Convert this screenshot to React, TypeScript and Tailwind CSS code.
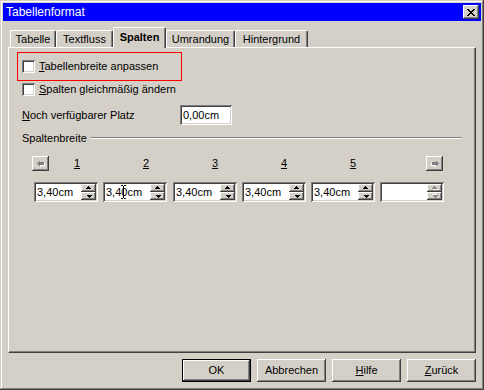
import React from 'react';

const raised =
  'shadow-[inset_-1px_-1px_#404040,inset_1px_1px_#ffffff,inset_-2px_-2px_#808080,inset_2px_2px_#d4d0c8]';
const sunken =
  'shadow-[inset_1px_1px_#808080,inset_-1px_-1px_#ffffff,inset_2px_2px_#404040,inset_-2px_-2px_#d4d0c8]';

function TinyArrow({ up, disabled }: { up: boolean; disabled?: boolean }) {
  const d = 'M2 0h1v1h1v1h1v1H0V2h1V1h1z';
  return (
    <svg width="6" height="4" viewBox="0 0 6 4" className={up ? '' : 'rotate-180'} shapeRendering="crispEdges">
      {disabled && <path d={d} fill="#ffffff" transform="translate(1 1)" />}
      <path d={d} fill={disabled ? '#808080' : '#000000'} />
    </svg>
  );
}

function BigArrow({ right }: { right?: boolean }) {
  const d = 'M0 2h1V1h1V0h1v1h4v3H3v1H2V4H1V3H0z';
  return (
    <svg width="8" height="6" viewBox="0 0 8 6" className={right ? '-scale-x-100' : ''} shapeRendering="crispEdges">
      <path d={d} fill="#ffffff" transform="translate(1 1)" />
      <path d={d} fill="#808080" />
    </svg>
  );
}

function CloseGlyph() {
  const rows = [
    [0, 1, 6, 7],
    [1, 2, 5, 6],
    [2, 3, 4, 5],
    [3, 4],
    [2, 3, 4, 5],
    [1, 2, 5, 6],
    [0, 1, 6, 7],
  ];
  return (
    <svg width="8" height="7" viewBox="0 0 8 7" shapeRendering="crispEdges">
      {rows.map((cols, y) => cols.map((x) => <rect key={`${x}-${y}`} x={x} y={y} width="1" height="1" fill="#000" />))}
    </svg>
  );
}

function Checkbox({ children }: { children: React.ReactNode }) {
  return (
    <div className="flex items-center gap-[4px]">
      <div className={`w-[13px] h-[13px] bg-white ${sunken}`} />
      <span className="leading-none">{children}</span>
    </div>
  );
}

function SpinField({ value, cursor, className }: { value: string; cursor?: boolean; className: string }) {
  const disabled = value === '';
  return (
    <div className={`relative w-[64px] h-[20px] bg-white p-[2px] flex ${sunken} ${className}`}>
      <div className="flex-1 flex items-center pl-[1px]">{value}</div>
      <div className="w-[15px] flex flex-col">
        <div className={`h-[8px] bg-[#d4d0c8] flex items-center justify-center ${raised}`}>
          <TinyArrow up disabled={disabled} />
        </div>
        <div className={`h-[8px] bg-[#d4d0c8] flex items-center justify-center ${raised}`}>
          <TinyArrow up={false} disabled={disabled} />
        </div>
      </div>
      {cursor && (
        <svg className="absolute left-[18px] top-[3px]" width="5" height="14" viewBox="0 0 5 14" shapeRendering="crispEdges">
          <path d="M0 0h2v1H0zM3 0h2v1H3zM2 1h1v12H2zM0 13h2v1H0zM3 13h2v1H3z" fill="#000" />
        </svg>
      )}
    </div>
  );
}

function Tab({ label, w, active }: { label: string; w: string; active?: boolean }) {
  return (
    <div
      className={`${w} ${
        active ? 'h-[21px] -mb-px font-bold bg-[#d4d0c8] relative z-10 pb-[2px]' : 'h-[17px]'
      } flex items-center justify-center border-t border-l border-white border-r border-r-[#404040] rounded-tl-[2px] rounded-tr-[2px] shadow-[inset_-1px_0_#808080]`}
    >
      {label}
    </div>
  );
}

function DlgButton({ children, isDefault }: { children: React.ReactNode; isDefault?: boolean }) {
  return (
    <div className={`w-[69px] h-[23px] ${isDefault ? 'border border-black' : ''}`}>
      <div className={`w-full h-full flex items-center justify-center ${raised}`}>{children}</div>
    </div>
  );
}

export default function App() {
  const fields = [
    { v: '3,40cm', ml: 'ml-0' },
    { v: '3,40cm', ml: 'ml-[5px]', cursor: true },
    { v: '3,40cm', ml: 'ml-[6px]' },
    { v: '3,40cm', ml: 'ml-[5px]' },
    { v: '3,40cm', ml: 'ml-[5px]' },
    { v: '', ml: 'ml-[5px]' },
  ];
  const labels = [
    { n: '1', ml: 'ml-[23px]' },
    { n: '2', ml: 'ml-[59px]' },
    { n: '3', ml: 'ml-[59px]' },
    { n: '4', ml: 'ml-[59px]' },
    { n: '5', ml: 'ml-[59px]' },
  ];

  return (
    <div className="w-[484px] h-[390px] bg-[#d4d0c8] p-[3px] flex flex-col text-[11px] text-black font-['Liberation_Sans',sans-serif] shadow-[inset_-1px_-1px_#404040,inset_1px_1px_#d4d0c8,inset_-2px_-2px_#808080,inset_2px_2px_#ffffff]">
      {/* title bar */}
      <div className="h-[18px] bg-[#0000ff] flex items-center justify-between pl-[3px] pr-[2px]">
        <span className="text-white text-[12px] leading-none">Tabellenformat</span>
        <div className={`w-[16px] h-[14px] bg-[#d4d0c8] flex items-center justify-center ${raised}`}>
          <CloseGlyph />
        </div>
      </div>

      {/* tabs */}
      <div className="mt-[6px] ml-[7px] flex items-end h-[20px]">
        <Tab label="Tabelle" w="w-[46px]" />
        <Tab label="Textfluss" w="w-[57px]" />
        <Tab label="Spalten" w="w-[53px]" active />
        <Tab label="Umrandung" w="w-[69px]" />
        <Tab label="Hintergrund" w="w-[73px]" />
      </div>

      {/* panel */}
      <div className="ml-[5px] w-[468px] h-[306px] border-l border-t border-white border-r border-b border-r-[#404040] border-b-[#404040] shadow-[inset_-1px_-1px_#808080] pt-[4px] pl-[8px] flex flex-col">
        <div className="w-[165px] h-[29px] border border-[#ff0000] flex items-center pl-[4px]">
          <Checkbox>
            <u>T</u>abellenbreite anpassen
          </Checkbox>
        </div>
        <div className="mt-[2px] ml-[5px]">
          <Checkbox>
            <u>S</u>palten gleichmäßig ändern
          </Checkbox>
        </div>
        <div className="mt-[9px] ml-[5px] flex items-center h-[20px]">
          <span className="w-[158px]">
            <u>N</u>och verfügbarer Platz
          </span>
          <div className={`w-[52px] h-[20px] bg-white flex items-center pl-[3px] ${sunken}`}>0,00cm</div>
        </div>
        <div className="mt-[6px] ml-[5px] w-[440px] h-[14px] flex items-center gap-[4px]">
          <span>Spaltenbreite</span>
          <div className="flex-1 border-t border-t-[#808080] border-b border-b-white" />
        </div>
        <div className="mt-[11px] ml-[15px] flex items-center h-[15px]">
          <div className={`w-[17px] h-[15px] flex items-center justify-center ${raised}`}>
            <BigArrow />
          </div>
          {labels.map((l) => (
            <span key={l.n} className={`${l.ml} w-[10px] text-center underline`}>
              {l.n}
            </span>
          ))}
          <div className={`ml-[68px] w-[17px] h-[15px] flex items-center justify-center ${raised}`}>
            <BigArrow right />
          </div>
        </div>
        <div className="mt-[11px] ml-[17px] flex">
          {fields.map((f, i) => (
            <SpinField key={i} value={f.v} cursor={f.cursor} className={f.ml} />
          ))}
        </div>
      </div>

      {/* buttons */}
      <div className="mt-[6px] ml-[5px] w-[468px] flex justify-end gap-[6px]">
        <DlgButton isDefault>OK</DlgButton>
        <DlgButton>Abbrechen</DlgButton>
        <DlgButton>
          <span>
            <u>H</u>ilfe
          </span>
        </DlgButton>
        <DlgButton>
          <span>
            <u>Z</u>urück
          </span>
        </DlgButton>
      </div>
    </div>
  );
}
